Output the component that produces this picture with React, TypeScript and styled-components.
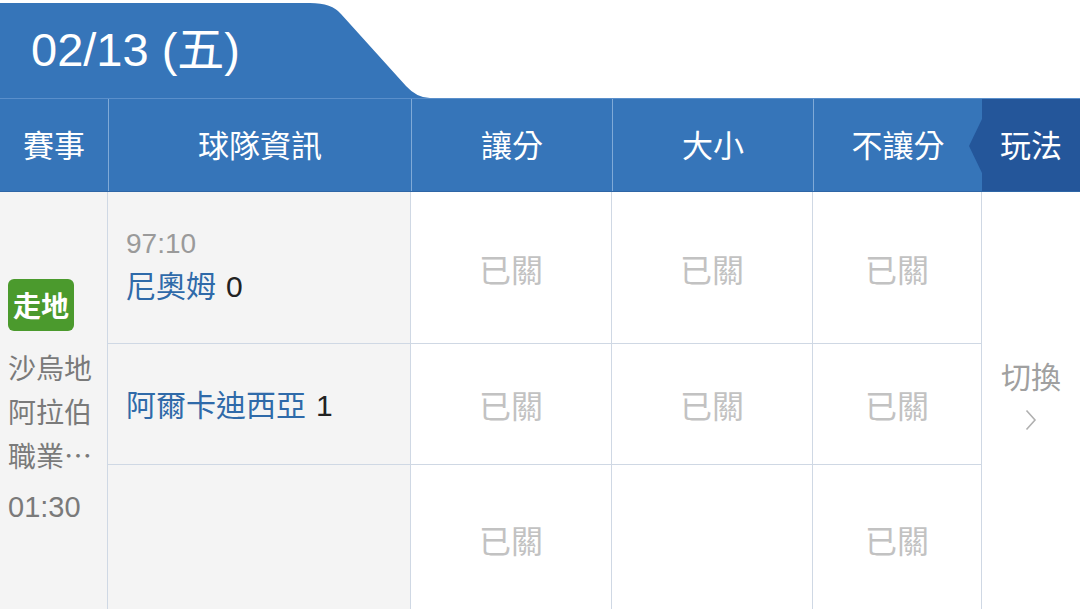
import React from 'react'
import styled, { createGlobalStyle } from 'styled-components'

const BLUE = '#3675b9'
const DARK_BLUE = '#24569a'
const LINE = '#cfd8e4'
const PANEL = '#f4f4f4'
const COLS = '108px 303px 201px 201px 169px 98px'

const GlobalStyle = createGlobalStyle`
    html, body {
        margin: 0;
        padding: 0;
        background: #fff;
    }
    body {
        font-family: "Liberation Sans", "Noto Sans CJK TC", sans-serif;
        overflow: hidden;
    }
    * {
        box-sizing: border-box;
    }
`

const Page = styled.div`
    width: 1080px;
    height: 609px;
    overflow: hidden;
    display: flex;
    flex-direction: column;
`

const TabBar = styled.div`
    display: flex;
    align-items: stretch;
    height: 95px;
    margin-top: 3px;
    flex-shrink: 0;
`

const DateTab = styled.div`
    width: 300px;
    background: ${BLUE};
    color: #fff;
    font-size: 47px;
    display: flex;
    align-items: center;
    padding-left: 31px;
    padding-bottom: 10px;
    white-space: nowrap;
`

const Header = styled.div`
    display: grid;
    grid-template-columns: ${COLS};
    height: 93px;
    flex-shrink: 0;
    background: ${BLUE};
    border-top: 1px solid #5a8fcb;
`

const HeadCell = styled.div<{ $divider?: boolean }>`
    display: flex;
    align-items: center;
    justify-content: center;
    color: #fff;
    font-family: "Noto Sans CJK TC", sans-serif;
    font-size: 31px;
    padding-bottom: 4px;
    border-left: ${p => (p.$divider ? '1px solid rgba(190, 214, 240, 0.55)' : 'none')};
`

const PlayCell = styled(HeadCell)`
    position: relative;
    background: ${DARK_BLUE};

    &::before {
        content: '';
        position: absolute;
        left: -13px;
        top: 20px;
        border-top: 27px solid transparent;
        border-bottom: 27px solid transparent;
        border-right: 13px solid ${DARK_BLUE};
    }
`

const Body = styled.div`
    display: grid;
    grid-template-columns: ${COLS};
    grid-template-rows: 152px 121px 148px;
    border-top: 1px solid #2e66a6;
    font-family: "Noto Sans CJK TC", sans-serif;
`

const LeagueCell = styled.div`
    grid-column: 1;
    grid-row: 1 / span 3;
    background: ${PANEL};
    border-right: 1px solid ${LINE};
    display: flex;
    flex-direction: column;
    justify-content: center;
    align-items: flex-start;
    padding: 0 0 2px 8px;
`

const LiveBadge = styled.div`
    background: #4b9a2d;
    color: #fff;
    font-weight: 700;
    font-size: 28px;
    width: 66px;
    height: 52px;
    border-radius: 6px;
    display: flex;
    align-items: center;
    justify-content: center;
    margin-bottom: 14px;
`

const LeagueName = styled.div`
    color: #7a7a7a;
    font-size: 28px;
    line-height: 44px;
    width: 90px;
`

const KickOff = styled.div`
    color: #7a7a7a;
    font-family: "Liberation Sans", sans-serif;
    font-size: 29px;
    margin-top: 14px;
`

const TeamCell = styled.div<{ $last?: boolean }>`
    grid-column: 2;
    background: ${PANEL};
    border-right: 1px solid ${LINE};
    border-bottom: ${p => (p.$last ? 'none' : `1px solid ${LINE}`)};
    display: flex;
    flex-direction: column;
    justify-content: center;
    padding-left: 18px;
`

const Clock = styled.div`
    color: #9a9a9a;
    font-family: "Liberation Sans", sans-serif;
    font-size: 28px;
    line-height: 36px;
`

const TeamName = styled.div`
    color: #2f6aa9;
    font-size: 30px;
    line-height: 44px;
    white-space: nowrap;
`

const Score = styled.span`
    color: #222;
    font-family: "Liberation Sans", sans-serif;
    margin-left: 10px;
`

const OddsCell = styled.div<{ $last?: boolean }>`
    background: #fff;
    border-right: 1px solid ${LINE};
    border-bottom: ${p => (p.$last ? 'none' : `1px solid ${LINE}`)};
    display: flex;
    align-items: center;
    justify-content: center;
    color: #c2c2c2;
    font-size: 32px;
`

const SwitchCell = styled.div`
    grid-column: 6;
    grid-row: 1 / span 3;
    background: #fff;
    display: flex;
    flex-direction: column;
    align-items: center;
    justify-content: center;
    gap: 12px;
    color: #a0a0a0;
    font-size: 30px;
    padding-bottom: 22px;
`

const Chevron = () => (
    <svg width="12" height="22" viewBox="0 0 12 22">
        <polyline points="1.5,1.5 10,11 1.5,20.5" fill="none" stroke="#b0b0b0" strokeWidth="1.6" />
    </svg>
)

const TabWedge = () => (
    <svg width="130" height="95" viewBox="0 0 130 95">
        <path d="M0,0 H10 Q32,0 41,11 L106,83 Q117,95 130,95 H0 Z" fill={BLUE} />
    </svg>
)

const rows = [
    { clock: '97:10', team: '尼奧姆', score: '0', odds: ['已關', '已關', '已關'] },
    { team: '阿爾卡迪西亞', score: '1', odds: ['已關', '已關', '已關'] },
    { odds: ['已關', '', '已關'] },
]

const App = () => (
    <Page>
        <GlobalStyle />
        <TabBar>
            <DateTab>02/13 (五)</DateTab>
            <TabWedge />
        </TabBar>
        <Header>
            <HeadCell>賽事</HeadCell>
            <HeadCell $divider>球隊資訊</HeadCell>
            <HeadCell $divider>讓分</HeadCell>
            <HeadCell $divider>大小</HeadCell>
            <HeadCell $divider>不讓分</HeadCell>
            <PlayCell>玩法</PlayCell>
        </Header>
        <Body>
            <LeagueCell>
                <LiveBadge>走地</LiveBadge>
                <LeagueName>沙烏地阿拉伯職業…</LeagueName>
                <KickOff>01:30</KickOff>
            </LeagueCell>
            <SwitchCell>
                <span>切換</span>
                <Chevron />
            </SwitchCell>
            {rows.map((row, i) => {
                const last = i === rows.length - 1
                return (
                    <React.Fragment key={i}>
                        <TeamCell $last={last}>
                            {row.clock && <Clock>{row.clock}</Clock>}
                            {row.team && (
                                <TeamName>
                                    {row.team}
                                    <Score>{row.score}</Score>
                                </TeamName>
                            )}
                        </TeamCell>
                        {row.odds.map((o, j) => (
                            <OddsCell key={j} $last={last}>{o}</OddsCell>
                        ))}
                    </React.Fragment>
                )
            })}
        </Body>
    </Page>
)

export default App
